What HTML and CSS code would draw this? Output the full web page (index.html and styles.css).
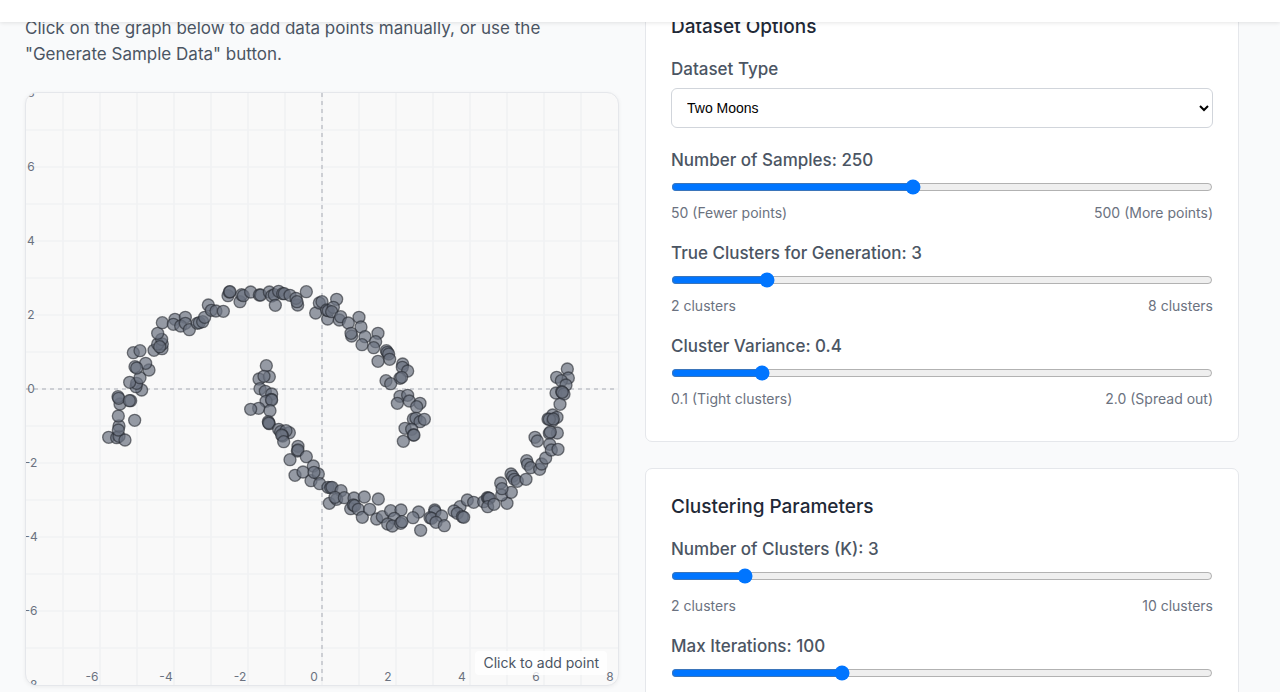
FILE: index.html
```html
<!DOCTYPE html>
<html lang="en">
<head>
<meta charset="utf-8">
<meta name="viewport" content="width=device-width, initial-scale=1">
<title>K-Means Clustering</title>
<link rel="stylesheet" href="styles.css">
</head>
<body>
<header class="topbar"></header>
<main class="layout">
  <section class="workspace">
    <p class="intro">Click on the graph below to add data points manually, or use the "Generate Sample Data" button.</p>
    <div class="graph">
      <svg class="plot" viewBox="0 0 1776 1776" role="img" aria-label="Scatter plot of two moons">
        <g id="grid" class="grid"></g>
        <path class="axis" d="M888 0V1776M0 888H1776"/>
        <g id="ticks" class="ticks"></g>
        <g id="points" class="points"></g>
      </svg>
      <span class="tip">Click to add point</span>
    </div>
  </section>
  <aside class="panels">
    <section class="card">
      <h3 class="card-title">Dataset Options</h3>
      <div class="field field-select">
        <label class="label" for="type">Dataset Type</label>
        <select class="select" id="type"><option>Two Moons</option></select>
      </div>
      <div class="field">
        <label class="label" for="samples">Number of Samples: 250</label>
        <input class="slider" id="samples" type="range" min="50" max="500" step="10" value="250">
        <div class="hints"><span>50 (Fewer points)</span><span>500 (More points)</span></div>
      </div>
      <div class="field">
        <label class="label" for="true-clusters">True Clusters for Generation: 3</label>
        <input class="slider" id="true-clusters" type="range" min="2" max="8" value="3">
        <div class="hints"><span>2 clusters</span><span>8 clusters</span></div>
      </div>
      <div class="field">
        <label class="label" for="variance">Cluster Variance: 0.4</label>
        <input class="slider" id="variance" type="range" min="0.1" max="2" step="0.1" value="0.4">
        <div class="hints"><span>0.1 (Tight clusters)</span><span>2.0 (Spread out)</span></div>
      </div>
    </section>
    <section class="card card-params">
      <h3 class="card-title">Clustering Parameters</h3>
      <div class="field">
        <label class="label" for="k">Number of Clusters (K): 3</label>
        <input class="slider" id="k" type="range" min="2" max="10" value="3">
        <div class="hints"><span>2 clusters</span><span>10 clusters</span></div>
      </div>
      <div class="field">
        <label class="label" for="iterations">Max Iterations: 100</label>
        <input class="slider" id="iterations" type="range" min="10" max="300" step="10" value="100">
      </div>
    </section>
  </aside>
</main>
<script src="plot.js"></script>
</body>
</html>
```
FILE: styles.css
```css
* { box-sizing: border-box; }
html, body { height: 100%; }
body {
  margin: 0;
  overflow: hidden;
  background: #f9fafb;
  color: #4b5563;
  font: 17px/26px Inter, "Liberation Sans", sans-serif;
}
.topbar {
  position: fixed;
  top: 0;
  left: 0;
  right: 0;
  z-index: 10;
  height: 22px;
  background: #fff;
  box-shadow: 0 1px 4px rgba(0, 0, 0, 0.1);
}
.layout {
  display: grid;
  grid-template-columns: 1fr 1fr;
  gap: 26px;
  margin-top: -12px;
  padding: 0 41px 0 25px;
}
.workspace { padding-top: 27px; }
.intro { margin: 0 0 25px; }
.graph {
  position: relative;
  overflow: hidden;
  border: 1px solid #e5e7eb;
  border-radius: 12px;
  background: #f9f9f9;
  box-shadow: 0 1px 4px rgba(0, 0, 0, 0.06);
}
.plot { display: block; width: 100%; }
.grid { stroke: #f1f2f3; stroke-width: 5; fill: none; }
.axis { stroke: #cdcfd4; stroke-width: 6; stroke-dasharray: 12 12; fill: none; }
.ticks { fill: #6b7280; font-size: 36px; text-anchor: middle; }
.points { fill: #6b7280; stroke: #24282f; stroke-width: 4; }
.points circle { fill-opacity: 0.7; stroke-opacity: 0.6; }
.tip {
  position: absolute;
  right: 11px;
  bottom: 10px;
  padding: 0 8px;
  border-radius: 4px;
  background: rgba(255, 255, 255, 0.8);
  font-size: 14px;
  line-height: 24px;
}
.panels { display: flex; flex-direction: column; gap: 26px; }
.card {
  padding: 25px 25px 15px;
  border: 1px solid #e5e7eb;
  border-radius: 7px;
  background: #fff;
}
.card-title { margin: 0 0 16px; color: #1f2937; font-size: 19px; font-weight: 500; }
.field { display: flex; flex-direction: column; gap: 6px; margin-bottom: 15px; }
.field-select { margin-bottom: 19px; }
.label { font-weight: 500; }
.select {
  height: 40px;
  padding: 0 11px;
  border: 1px solid #d1d5db;
  border-radius: 6px;
  background: #fff;
  color: #000;
  font: 14px "Liberation Sans", Arial, sans-serif;
}
.slider { width: 100%; height: 16px; margin: 0; accent-color: #0075ff; }
.hints {
  display: flex;
  justify-content: space-between;
  color: #6b7280;
  font-size: 14px;
  line-height: 24px;
}
.card-params .slider { margin-bottom: 4px; }
```
FILE: plot.js
```js
const NS = "http://www.w3.org/2000/svg";
const UNIT = 111;
const CENTER = 888;

function add(parent, name, attrs, text) {
  const el = document.createElementNS(NS, name);
  for (const key in attrs) el.setAttribute(key, attrs[key]);
  if (text !== undefined) el.textContent = text;
  document.getElementById(parent).appendChild(el);
}

for (let v = -7; v <= 7; v++) {
  const p = CENTER + v * UNIT;
  add("grid", "path", { d: `M${p} 0V1776M0 ${p}H1776` });
}
for (let v = -8; v <= 8; v += 2) {
  const p = CENTER + v * UNIT;
  add("ticks", "text", { x: 15, y: CENTER - v * UNIT + 13 }, v);
  if (v > -8) add("ticks", "text", { x: p - 24, y: 1764 }, v);
}

// Samples grouped by region: the region's origin, then x,y pairs within it.
const regions = [
  [192, 531, "56,502 80,503 87,499 105,510 87,468 85,480 134,451 85,438 90,402 84,380 86,385 122,392 118,392 155,360 138,350 140,340 119,337 150,323 177,300 167,280 135,290 140,294 130,248 150,242 192,241 216,236 217,222 203,222 215,208 203,190 209,230 217,158 255,148 250,163 286,142 272,168 286,160 298,179 322,160 328,158 338,155 344,142 355,105 364,121 378,123 400,124 414,77 418,66 420,65 450,95 455,74 460,77"],
  [582, 531, "92,66 118,75 122,75 148,66 155,78 163,74 176,64 166,106 188,71 193,71 210,76 233,105 228,85 231,95 259,65 287,129 298,99 306,95 350,88 323,147 320,120 325,122 340,112 335,125 358,150 362,140 385,159 417,142 423,171 395,198 393,190 435,200 426,224 474,190 467,215 461,233 499,242 502,247 506,252 509,268 474,274 548,282 547,292 563,303 540,325 545,322 498,332 512,341 540,379 532,400 563,376 568,393 600,400 590,410 580,447 588,445 600,455 613,448 555,475 575,478 580,495 582,495 550,514"],
  [642, 741, "79,77 57,117 88,110 72,109 60,146 76,154 95,162 94,178 78,184 95,180 56,205 32,208 90,212 85,245 88,251 86,249 116,268 122,275 148,278 138,272 128,288 125,285 131,305 174,319 172,333 174,330 150,359 199,350 220,378 165,406 189,396 213,422 235,402 222,397 239,431 264,442 272,443 276,442 303,452 268,490 290,478 285,472 313,473 342,474 373,471 415,477 332,506 340,495 344,497 355,508 367,532 389,508 410,537 427,530"],
  [1062, 1041, "32,212 63,210 43,235 23,252 37,258 62,250 66,245 116,216 99,233 122,271 164,210 165,215 150,233 155,235 185,228 168,247 193,257 240,200 222,213 232,220 247,230 251,232 262,180 281,187 311,185 322,173 325,174 328,175 323,200 342,193 381,190 365,165 394,157 362,129 366,146 393,102 398,109 403,118 412,124 438,118 440,62 443,73 452,83 479,88 485,72 497,54"],
  [1452, 771, "172,57 140,82 175,84 154,92 168,105 138,129 155,125 162,132 157,127 150,163 128,195 141,202 114,207 128,212 118,208 130,207 142,249 118,250 121,246 75,262 82,273 119,283 124,300 144,298"]
];
for (const [ox, oy, list] of regions) {
  for (const pair of list.split(" ")) {
    const [x, y] = pair.split(",").map(Number);
    add("points", "circle", { cx: ox + x, cy: oy + y, r: 18 });
  }
}
```
